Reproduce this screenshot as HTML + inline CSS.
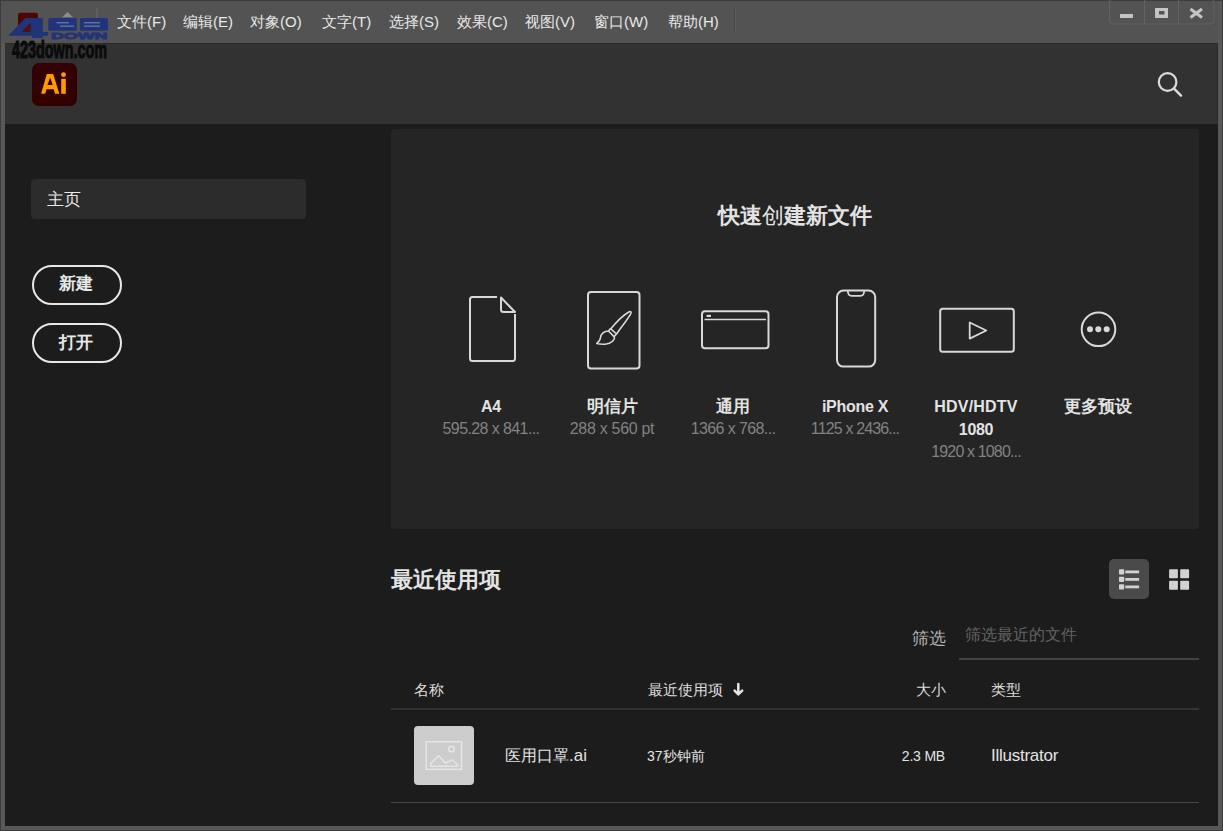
<!DOCTYPE html>
<html><head><meta charset="utf-8">
<style>
*{margin:0;padding:0;box-sizing:border-box}
html,body{width:1223px;height:831px;overflow:hidden;background:#585858;font-family:"Liberation Sans",sans-serif}
div{position:absolute;white-space:nowrap}
#frame{left:0;top:0;width:1223px;height:831px;background:#585858;border:1px solid #3c3c3c}
#menubar{left:1px;top:1px;width:1217px;height:42px;background:#535353}
.menu{top:13px;font-size:15px;line-height:17px;color:#e8e8e8}
#header{left:5px;top:43px;width:1213px;height:81px;background:#323232;border-top:1px solid #2a2a2a;border-right:1px solid #2a2a2a}
#body{left:5px;top:124px;width:1213px;height:702px;background:#1c1c1c}
#home{left:31px;top:179px;width:275px;height:40px;background:#2c2c2c;border-radius:4px}
.ht{font-size:17px;line-height:20px;color:#e8e8e8}
.pill{left:32px;width:90px;height:40px;border:2px solid #e8e8e8;border-radius:20px}
.pt{font-size:17px;line-height:20px;font-weight:bold;color:#e8e8e8}
#card{left:391px;top:129px;width:808px;height:400px;background:#252525;border-radius:4px}
.ctitle{top:204px;left:391px;width:808px;text-align:center;font-size:22px;line-height:24px;font-weight:bold;color:#e3e3e3}
.plabel{width:140px;text-align:center;font-size:16px;font-weight:bold;color:#e3e3e3;line-height:22px;letter-spacing:-0.3px}
.cj{letter-spacing:0}
.pdim{width:140px;text-align:center;font-size:16px;color:#828282;line-height:22px;letter-spacing:-0.6px}
.cj{font-size:17px}
.recent{left:391px;top:568px;font-size:22px;line-height:24px;font-weight:bold;color:#e3e3e3}
.th{top:681px;font-size:15px;line-height:18px;color:#dcdcdc}
.line{left:391px;width:808px;height:2px;background:#333333}
.td{font-size:15px;line-height:18px;color:#e3e3e3}
</style></head>
<body>
<div id="frame"></div>
<div id="menubar"></div>
<div class="menu" style="left:117px">文件(F)</div>
<div class="menu" style="left:183px">编辑(E)</div>
<div class="menu" style="left:250px">对象(O)</div>
<div class="menu" style="left:322px">文字(T)</div>
<div class="menu" style="left:389px">选择(S)</div>
<div class="menu" style="left:457px">效果(C)</div>
<div class="menu" style="left:525px">视图(V)</div>
<div class="menu" style="left:594px">窗口(W)</div>
<div class="menu" style="left:668px">帮助(H)</div>
<div style="left:734px;top:8px;width:1px;height:26px;background:#474747"></div>
<div style="left:735px;top:8px;width:1px;height:26px;background:#5e5e5e"></div>

<div id="header"></div>
<div id="body"></div>

<div id="home"></div>
<div class="ht" style="left:47px;top:190px">主页</div>
<div class="pill" style="top:265px"></div>
<div class="pt" style="left:59px;top:274px">新建</div>
<div class="pill" style="top:323px"></div>
<div class="pt" style="left:59px;top:333px">打开</div>

<div id="card"></div>
<div class="ctitle">快速<span style="font-weight:normal">创</span>建新文件</div>

<div class="plabel" style="left:421px;top:396px">A4</div>
<div class="pdim" style="left:421px;top:418px">595.28 x 841...</div>
<div class="plabel" style="left:542px;top:396px"><span class="cj">明信片</span></div>
<div class="pdim" style="left:542px;top:418px;letter-spacing:-0.3px">288 x 560 pt</div>
<div class="plabel" style="left:663px;top:396px"><span class="cj">通用</span></div>
<div class="pdim" style="left:663px;top:418px">1366 x 768...</div>
<div class="plabel" style="left:785px;top:396px">iPhone X</div>
<div class="pdim" style="left:785px;top:418px;letter-spacing:-0.85px">1125 x 2436...</div>
<div class="plabel" style="left:906px;top:396px;letter-spacing:0.2px">HDV/HDTV</div>
<div class="plabel" style="left:906px;top:419px">1080</div>
<div class="pdim" style="left:906px;top:441px;letter-spacing:-0.85px">1920 x 1080...</div>
<div class="plabel" style="left:1028px;top:396px"><span class="cj">更多预设</span></div>

<div class="recent">最近使用项</div>
<div style="left:1109px;top:559px;width:40px;height:40px;background:#4a4a4a;border-radius:5px"></div>

<div style="left:912px;top:629px;font-size:17px;line-height:20px;color:#b6b6b6">筛选</div>
<div style="left:965px;top:625px;font-size:16px;line-height:20px;color:#626262">筛选最近的文件</div>
<div style="left:959px;top:658px;width:240px;height:2px;background:#434343"></div>

<div class="th" style="left:414px">名称</div>
<div class="th" style="left:648px">最近使用项</div>
<div class="th" style="left:916px">大小</div>
<div class="th" style="left:991px">类型</div>
<div class="line" style="top:708px"></div>

<div style="left:414px;top:726px;width:60px;height:59px;background:#cccccc;border-radius:4px"></div>
<div class="td" style="left:505px;top:747px;font-size:16px">医用口罩<span style="font-size:17px">.ai</span></div>
<div class="td" style="left:647px;top:747px;font-size:14px">37秒钟前</div>
<div class="td" style="left:845px;width:100px;text-align:right;top:747px;font-size:14px;letter-spacing:-0.2px">2.3 MB</div>
<div class="td" style="left:991px;top:747px;font-size:17px;letter-spacing:-0.25px">Illustrator</div>
<div class="line" style="top:802px;height:1px;background:#484848"></div>

<svg style="position:absolute;left:0;top:0" width="1223" height="831" viewBox="0 0 1223 831">
  <!-- window controls -->
  <rect x="1109.5" y="-2" width="104.5" height="26" rx="4" fill="none" stroke="#636363" stroke-width="1"/>
  <line x1="1144.5" y1="0" x2="1144.5" y2="24" stroke="#636363" stroke-width="1"/>
  <line x1="1178.5" y1="0" x2="1178.5" y2="24" stroke="#636363" stroke-width="1"/>
  <rect x="1120" y="14" width="13" height="4" fill="#c4c4c4"/>
  <path d="M1155,8 h13 v10 h-13 Z M1159,11 v3.5 h5.5 v-3.5 Z" fill="#c4c4c4" fill-rule="evenodd"/>
  <path d="M1190.5,9 L1202,17.5 M1202,9 L1190.5,17.5" stroke="#c4c4c4" stroke-width="3"/>


  <!-- watermark -->
  <rect x="18" y="12.7" width="20" height="20" rx="2" fill="#4c0606"/>
  <path d="M62,17.3 L67.5,12 L73,17.3 Z" fill="#8c8c8c"/>
  <rect x="96.5" y="8" width="1" height="10" fill="#6c6c6c"/>
  <path d="M8.1,35.7 L25.4,17.9 L42.8,17.9 L42.8,32 L48.2,32 L48.2,35.7 L42.8,35.7 L42.8,38 L32,38 L32,35.7 Z M22.5,31.4 L30.3,23 L30.3,31.4 Z" fill="#213479" fill-rule="evenodd"/>
  <path d="M22.5,31.4 L30.3,23 L30.3,31.4 Z" fill="#5a0c0c"/>
  <rect x="48.3" y="17.9" width="28.5" height="12.9" rx="1.5" fill="#213479"/>
  <rect x="56.5" y="22.2" width="12.5" height="1.1" fill="#7585b0"/>
  <rect x="60" y="25.6" width="14" height="1.1" fill="#7585b0"/>
  <rect x="79.9" y="17.9" width="28.1" height="12.9" rx="1.5" fill="#213479"/>
  <rect x="84" y="22.2" width="16" height="1.1" fill="#7585b0"/>
  <rect x="84" y="25.6" width="16" height="1.1" fill="#7585b0"/>
  <text x="51" y="38.7" font-family="Liberation Sans" font-weight="bold" font-size="9" textLength="56.4" lengthAdjust="spacingAndGlyphs" fill="#213479" stroke="#213479" stroke-width="0.8">DOWN</text>
  <text x="12" y="57.8" font-family="Liberation Sans" font-weight="bold" font-size="23.5" textLength="95" lengthAdjust="spacingAndGlyphs" fill="#0a0a0a" stroke="#0a0a0a" stroke-width="1">423down.com</text>

  <!-- Ai logo -->
  <rect x="32" y="63" width="45" height="43" rx="7" fill="#330000"/>
  <path d="M41.1,93.8 L46.8,74 L53.2,74 L59.3,93.8 L55,93.8 L53.7,89.3 L46.5,89.3 L45.2,93.8 Z M47.5,85 L52.7,85 L50.1,77.6 Z" fill="#ff9a00" fill-rule="evenodd"/>
  <rect x="61.2" y="78.8" width="4.6" height="15" fill="#ff9a00"/>
  <circle cx="63.5" cy="74.7" r="2.4" fill="#ff9a00"/>

  <!-- search -->
  <circle cx="1167.6" cy="82" r="8.8" fill="none" stroke="#dcdcdc" stroke-width="2.2"/>
  <line x1="1174.3" y1="88.8" x2="1181" y2="95.6" stroke="#dcdcdc" stroke-width="2.4" stroke-linecap="round"/>

  <g fill="none" stroke="#d8d8d8" stroke-width="2" stroke-linejoin="round">
    <!-- doc -->
    <path d="M497,297 L472.5,297 Q470,297 470,299.5 L470,358.5 Q470,361 472.5,361 L512.5,361 Q515,361 515,358.5 L515,314"/>
    <path d="M501,297.5 L501,309.5 Q501,312 503.5,312 L515,312 Z"/>
    <!-- postcard -->
    <rect x="588" y="292" width="51.5" height="76.5" rx="3"/>
    <path stroke-width="1.6" d="M610.8,328.8 C616,322.5 623.5,315 628.8,312 C630.8,310.9 631.6,312 630.7,313.8 C627.5,319.5 621,327.5 616.6,334 Z M610.5,328.5 L608.5,331 M616.5,334 L614,336.6 M608.5,331 C603.5,331 600.8,334.5 600.5,337.5 C600.2,340.5 598.5,342.2 596.8,343.5 C601.5,344.8 609,344.8 612.5,341.2 C614.8,338.8 615.2,337.8 614,336.6 Z"/>
    <!-- generic -->
    <rect x="702" y="311.2" width="66.5" height="37" rx="3"/>
    <line x1="704.5" y1="319.5" x2="766" y2="319.5" stroke-width="1.3"/>
    <!-- iphone -->
    <rect x="837" y="290.6" width="38.2" height="76" rx="6.5"/>
    <path d="M847.8,291 Q848,295.8 851.5,295.8 L860.5,295.8 Q864,295.8 864.2,291" stroke-width="1.8"/>
    <!-- hdv -->
    <rect x="940.2" y="308.8" width="73.6" height="43" rx="2.5"/>
    <path d="M969.7,322.5 L969.7,338.6 L986.3,330.5 Z" stroke-width="1.8"/>
    <!-- more -->
    <circle cx="1098.5" cy="329.3" r="16.8"/>
  </g>
  <rect x="706.5" y="314.8" width="4.5" height="2.2" fill="#d8d8d8"/>
  <g fill="#d8d8d8">
    <circle cx="1090" cy="329.2" r="3"/>
    <circle cx="1098.3" cy="329.2" r="3"/>
    <circle cx="1106.7" cy="329.2" r="3"/>
  </g>

  <!-- list / grid -->
  <g fill="#d2d2d2">
    <rect x="1119" y="569.3" width="5.2" height="5.2" rx="0.8"/>
    <rect x="1119" y="576.8" width="5.2" height="5.2" rx="0.8"/>
    <rect x="1119" y="584.3" width="5.2" height="5.2" rx="0.8"/>
    <rect x="1125.3" y="570.5" width="13.8" height="2.8"/>
    <rect x="1125.3" y="578" width="13.8" height="2.8"/>
    <rect x="1125.3" y="585.5" width="13.8" height="2.8"/>
    <rect x="1169.1" y="569.2" width="8.8" height="9" rx="0.8"/>
    <rect x="1180.2" y="569.2" width="8.9" height="9" rx="0.8"/>
    <rect x="1169.1" y="580.8" width="8.8" height="9" rx="0.8"/>
    <rect x="1180.2" y="580.8" width="8.9" height="9" rx="0.8"/>
  </g>
  <!-- sort arrow -->
  <path d="M738.3,684 L738.3,694 M734.6,690.6 L738.3,694.4 L742.2,690.6" fill="none" stroke="#e6e6e6" stroke-width="2.5" stroke-linecap="round" stroke-linejoin="round"/>

  <!-- thumbnail image icon -->
  <g fill="none" stroke="#e6e6e6" stroke-width="1.5">
    <rect x="426.2" y="741.7" width="35.3" height="27.7"/>
    <path d="M430.5,766.2 L430.5,763.8 L438.6,755.8 L445.6,763 L452.1,759.8 L457.8,765 L457.8,766.2 Z"/>
    <circle cx="451.5" cy="749" r="2.8"/>
  </g>
</svg>
</body></html>
